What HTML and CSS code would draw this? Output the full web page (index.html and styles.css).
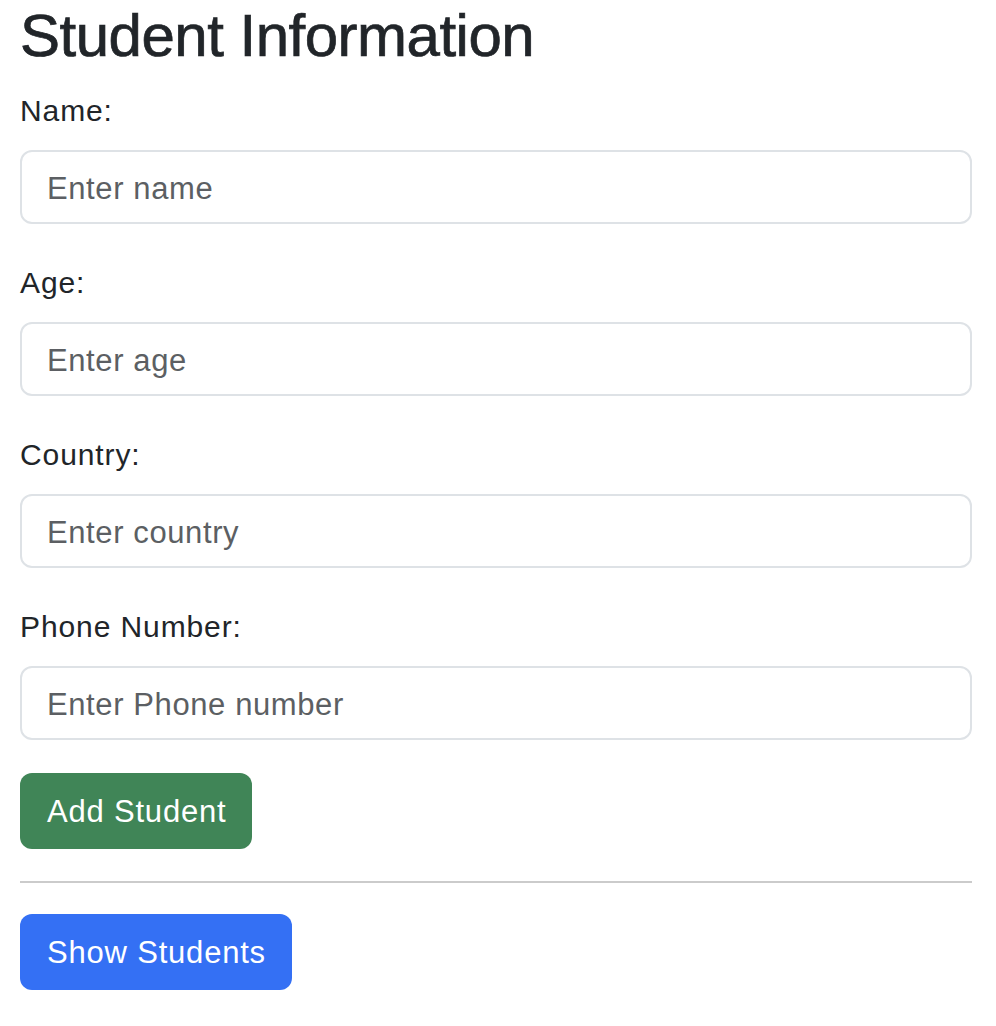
FILE: index.html
```html
<!DOCTYPE html>
<html lang="en">
<head>
<meta charset="utf-8">
<title>Student Information</title>
<link rel="stylesheet" href="styles.css">
</head>
<body>
<main class="page">
  <h1 class="title">Student Information</h1>
  <form class="student-form">
    <div class="field">
      <label class="label" for="name">Name:</label>
      <input class="input" id="name" type="text" placeholder="Enter name">
    </div>
    <div class="field">
      <label class="label" for="age">Age:</label>
      <input class="input" id="age" type="text" placeholder="Enter age">
    </div>
    <div class="field">
      <label class="label" for="country">Country:</label>
      <input class="input" id="country" type="text" placeholder="Enter country">
    </div>
    <div class="field">
      <label class="label" for="phone">Phone Number:</label>
      <input class="input" id="phone" type="text" placeholder="Enter Phone number">
    </div>
    <div class="actions">
      <button type="button" class="btn btn-success">Add Student</button>
    </div>
  </form>
  <hr class="divider">
  <div class="actions">
    <button type="button" class="btn btn-primary">Show Students</button>
  </div>
</main>
</body>
</html>
```

FILE: styles.css
```css
* { box-sizing: border-box; }

html, body {
  margin: 0;
  padding: 0;
  background: #ffffff;
}

body {
  font-family: "Liberation Sans", Arial, sans-serif;
  color: #212529;
}

.page {
  padding: 0 24px 0 20px;
}

.title {
  margin: 0;
  font-size: 60px;
  line-height: 72px;
  font-weight: 400;
  letter-spacing: -0.5px;
  color: #212529;
  -webkit-text-stroke: 0.7px #212529;
}

.student-form {
  display: flex;
  flex-direction: column;
  margin-top: 18px;
}

.field {
  display: flex;
  flex-direction: column;
  gap: 18px;
  margin-bottom: 38px;
}

.field:nth-last-child(2) {
  margin-bottom: 33px;
}

.label {
  font-size: 30px;
  line-height: 42px;
  letter-spacing: 0.9px;
  color: #212529;
}

.input {
  display: block;
  width: 100%;
  height: 74px;
  padding: 4px 25px 0;
  font-family: "Liberation Sans", Arial, sans-serif;
  font-size: 31px;
  letter-spacing: 0.6px;
  color: #212529;
  background: #ffffff;
  border: 2px solid #dee2e6;
  border-radius: 12px;
  outline: none;
}

.input::placeholder {
  color: #5c5f63;
  opacity: 1;
}

.actions {
  display: flex;
}

.btn {
  display: inline-flex;
  align-items: center;
  height: 76px;
  padding: 2px 26px 0 27px;
  font-family: "Liberation Sans", Arial, sans-serif;
  font-size: 31px;
  letter-spacing: 0.8px;
  color: #ffffff;
  border: none;
  border-radius: 12px;
  cursor: pointer;
}

.btn-success {
  background: #408557;
}

.btn-primary {
  background: #3470f4;
}

.divider {
  margin: 32px 0 31px;
  border: none;
  height: 2px;
  background: #cbcbcb;
}
```
